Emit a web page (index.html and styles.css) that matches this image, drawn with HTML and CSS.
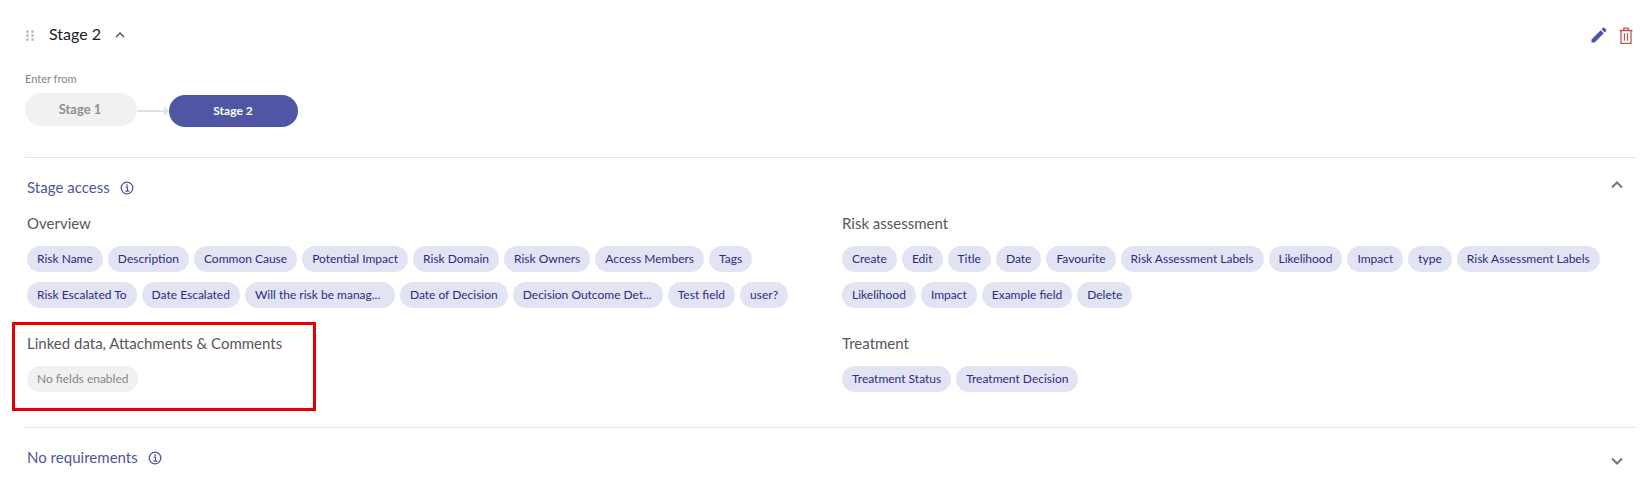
FILE: index.html
```html
<!DOCTYPE html>
<html lang="en">
<head>
<meta charset="utf-8">
<title>Stage 2</title>
<link rel="stylesheet" href="styles.css">
</head>
<body>
<main class="stage">
  <header class="stage-head">
    <svg class="grip" viewBox="0 0 8 11" width="8" height="11"><g fill="#c2c2c2"><circle cx="1.500" cy="1.500" r="1.500"/><circle cx="6.500" cy="1.500" r="1.500"/><circle cx="1.500" cy="5.500" r="1.500"/><circle cx="6.500" cy="5.500" r="1.500"/><circle cx="1.500" cy="9.500" r="1.500"/><circle cx="6.500" cy="9.500" r="1.500"/></g></svg>
    <h1 class="stage-title">Stage 2</h1>
    <svg class="chev-small" viewBox="0 0 10 6" width="10" height="6"><path d="M1 5l4-4 4 4" fill="none" stroke="#4a4a6a" stroke-width="1.400"/></svg>
    <div class="actions">
      <svg viewBox="0 0 24 24" width="20" height="20"><path fill="#4a55a8" d="M3 17.250V21h3.750L17.810 9.940l-3.750-3.750L3 17.250zM20.710 7.040a1 1 0 0 0 0-1.410l-2.340-2.340a1 1 0 0 0-1.410 0l-1.830 1.830 3.750 3.750 1.830-1.830z"/></svg>
      <svg viewBox="0 0 14 17" width="14" height="17"><path fill="none" stroke="#bb5a5e" stroke-width="1.300" d="M.500 3.500h13M2 3.500v12.800h10V3.500M4.800 3.300V1.100h4.400v2.200M5.500 6.300v7.500M8.500 6.300v7.500"/></svg>
    </div>
  </header>

  <div class="enter-label">Enter from</div>
  <div class="flow">
    <div class="node node-off">Stage 1</div>
    <svg class="arrow" viewBox="0 0 32 12" width="32" height="12"><path d="M0 6h27" stroke="#e2e2e2" stroke-width="2"/><path d="M27 1l5 5-5 5z" fill="#e2e2e2"/></svg>
    <div class="node node-on">Stage 2</div>
  </div>

  <section class="panel panel-access">
    <div class="panel-head">
      <span class="panel-title">Stage access</span>
      <svg class="info" viewBox="0 0 14 14" width="14" height="14"><circle cx="7" cy="7" r="5.800" fill="none" stroke="#4f55a5" stroke-width="1.300"/><path d="M5.600 6.200H7.500V10M5.500 10.200h3.800" fill="none" stroke="#4f55a5" stroke-width="1.200"/><rect x="6.300" y="3.400" width="1.500" height="1.500" fill="#4f55a5"/></svg>
      <svg class="chev chev-up" viewBox="0 0 12 8" width="12" height="8"><path d="M1 6.500l5-5 5 5" fill="none" stroke="#757575" stroke-width="2"/></svg>
    </div>
    <div class="groups">
      <div class="group">
        <h2 class="group-title">Overview</h2>
        <div class="chips">
          <span class="chip">Risk Name</span><span class="chip">Description</span><span class="chip">Common Cause</span><span class="chip">Potential Impact</span><span class="chip">Risk Domain</span><span class="chip">Risk Owners</span><span class="chip">Access Members</span><span class="chip">Tags</span><span class="chip">Risk Escalated To</span><span class="chip">Date Escalated</span><span class="chip chip-long">Will the risk be manag...</span><span class="chip">Date of Decision</span><span class="chip chip-long">Decision Outcome Det...</span><span class="chip">Test field</span><span class="chip">user?</span>
        </div>
      </div>
      <div class="group">
        <h2 class="group-title">Risk assessment</h2>
        <div class="chips">
          <span class="chip">Create</span><span class="chip">Edit</span><span class="chip">Title</span><span class="chip">Date</span><span class="chip">Favourite</span><span class="chip">Risk Assessment Labels</span><span class="chip">Likelihood</span><span class="chip">Impact</span><span class="chip">type</span><span class="chip">Risk Assessment Labels</span><span class="chip">Likelihood</span><span class="chip">Impact</span><span class="chip">Example field</span><span class="chip">Delete</span>
        </div>
      </div>
      <div class="group">
        <h2 class="group-title">Linked data, Attachments &amp; Comments</h2>
        <div class="chips"><span class="chip chip-empty">No fields enabled</span></div>
        <div class="marker"></div>
      </div>
      <div class="group">
        <h2 class="group-title">Treatment</h2>
        <div class="chips"><span class="chip">Treatment Status</span><span class="chip">Treatment Decision</span></div>
      </div>
    </div>
  </section>

  <section class="panel panel-req">
    <div class="panel-head">
      <span class="panel-title">No requirements</span>
      <svg class="info" viewBox="0 0 14 14" width="14" height="14"><circle cx="7" cy="7" r="5.800" fill="none" stroke="#4f55a5" stroke-width="1.300"/><path d="M5.600 6.200H7.500V10M5.500 10.200h3.800" fill="none" stroke="#4f55a5" stroke-width="1.200"/><rect x="6.300" y="3.400" width="1.500" height="1.500" fill="#4f55a5"/></svg>
      <svg class="chev chev-down" viewBox="0 0 12 8" width="12" height="8"><path d="M1 1.500l5 5 5-5" fill="none" stroke="#757575" stroke-width="2"/></svg>
    </div>
  </section>
</main>
</body>
</html>
```
FILE: styles.css
```css
* { box-sizing: border-box; }
html, body { margin: 0; background: #fff; }
body { font-family: Lato, "Noto Sans", sans-serif; overflow: hidden; }

.stage { width: 1651px; height: 498px; padding: 21px 15px 0 25px; }

.stage-head { display: flex; align-items: center; height: 28px; }
.grip { margin: 0 15px 0 1px; }
.stage-title { margin: 0; font-size: 16px; font-weight: 400; color: #1c1c2e; line-height: 26px; padding-bottom: 2px; }
.chev-small { margin-left: 14px; }
.actions { margin-left: auto; display: flex; align-items: center; gap: 10px; padding-right: 3px; }

.enter-label { margin-top: 23px; font-size: 11px; line-height: 14px; color: #84848a; }

.flow { display: flex; align-items: flex-start; margin-top: 7px; }
.node { display: flex; align-items: center; justify-content: center; border-radius: 17px; font-weight: 700; padding-bottom: 2px; }
.node-off { width: 112px; height: 33px; background: #f1f1f1; color: #8f8f8f; font-size: 13px; padding-right: 2px; }
.node-on { width: 129px; height: 32px; margin-top: 2px; background: #5056a4; color: #fff; font-size: 12px; padding-right: 1px; }
.arrow { flex: none; margin-top: 12px; }

.panel { border-top: 1px solid #e4e4ee; }
.panel-access { margin-top: 30px; padding-top: 20px; }
.panel-req { margin-top: 35px; padding-top: 20px; }

.panel-head { display: flex; align-items: center; height: 20px; padding: 0 2px; }
.panel-title { font-size: 15px; color: #4f55a0; line-height: 19px; padding-bottom: 1px; letter-spacing: .02px; }
.info { margin-left: 10px; }
.chev { margin-left: auto; margin-right: 11px; }
.chev-up { margin-bottom: 6px; }
.chev-down { margin-top: 6px; }

.groups { display: grid; grid-template-columns: 815px 1fr; margin-top: 16px; padding-left: 2px; }
.group { position: relative; }
.group:nth-child(-n+2) { height: 120px; }
.group-title { margin: 0; font-size: 15px; font-weight: 400; line-height: 19px; padding-bottom: 1px; color: #57575c; }

.chips { display: flex; flex-wrap: wrap; gap: 10px 5px; margin-top: 12px; }
.chip { display: inline-flex; align-items: center; height: 26px; padding: 0 10px 1px; border-radius: 13px; background: #e2e4f3; color: #2d2a85; font-size: 12px; white-space: nowrap; }
.chip-long { width: 150px; }
.chip-empty { background: #f1f1f1; color: #85858a; }

.marker { position: absolute; left: -15px; top: -12px; width: 304px; height: 89px; border: 3px solid #e60000; pointer-events: none; }
```
